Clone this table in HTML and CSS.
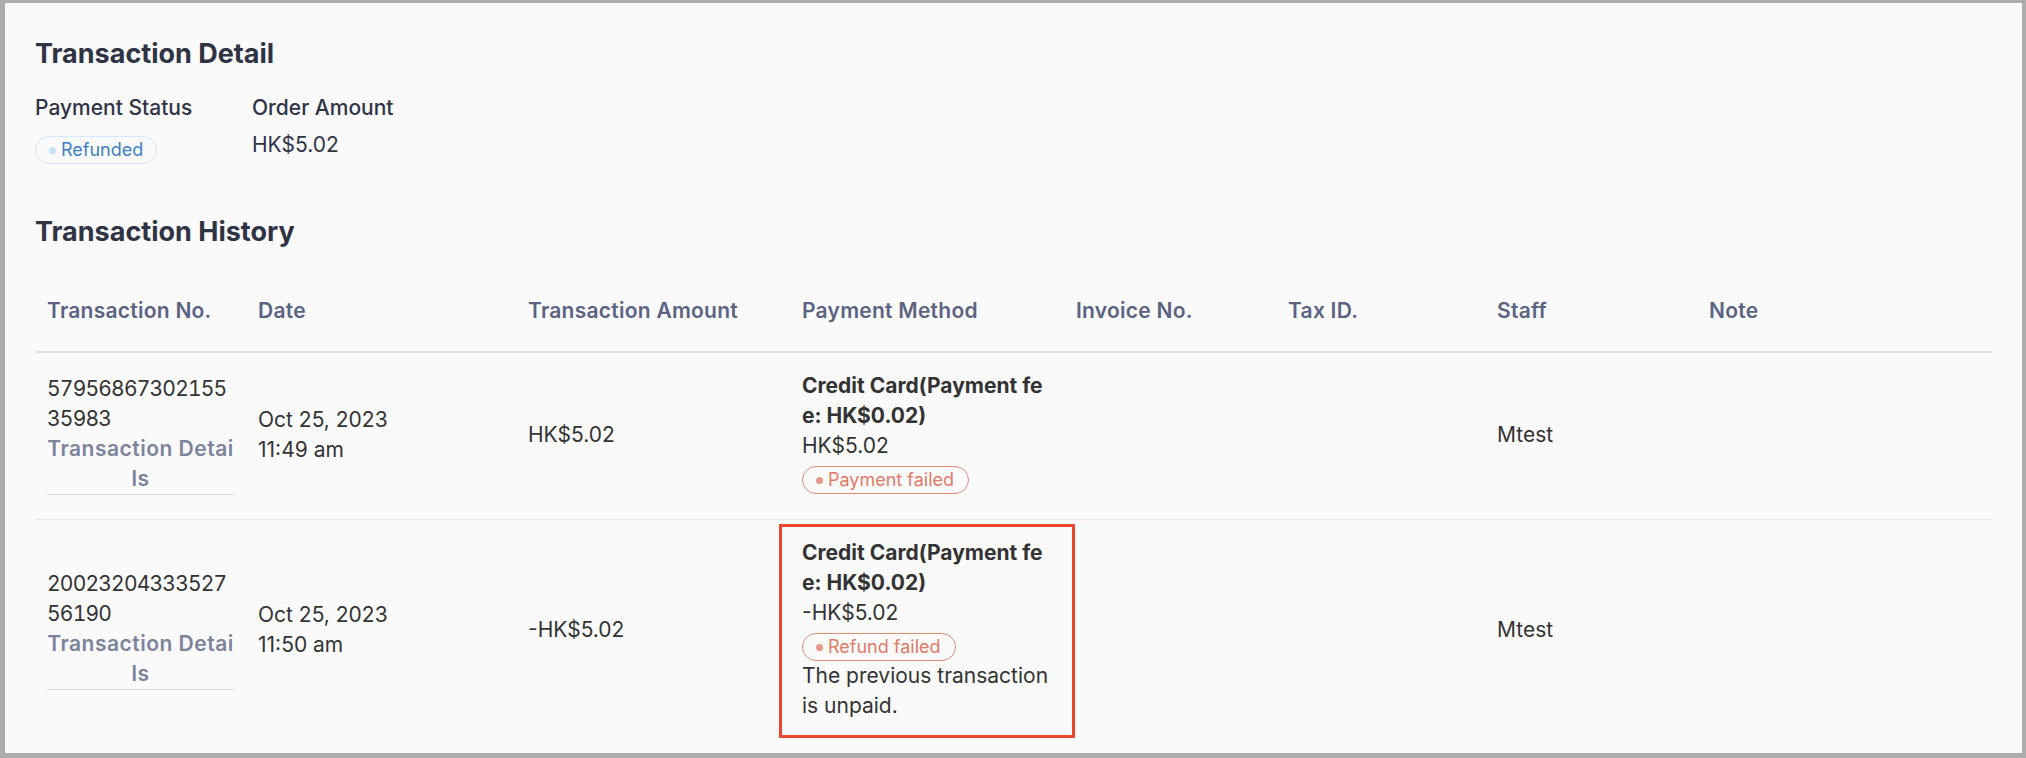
FILE: index.html
```html
<!DOCTYPE html>
<html lang="en">
<head>
<meta charset="utf-8">
<title>Transaction Detail</title>
<link rel="stylesheet" href="styles.css">
</head>
<body>
<div class="frame">
  <h2 class="title">Transaction Detail</h2>
  <div class="fields">
    <div class="field field-status">
      <div class="label">Payment Status</div>
      <div class="value"><span class="badge badge-info"><i class="dot"></i>Refunded</span></div>
    </div>
    <div class="field">
      <div class="label">Order Amount</div>
      <div class="value">HK$5.02</div>
    </div>
  </div>

  <h2 class="title history-title">Transaction History</h2>
  <table class="history">
    <colgroup>
      <col class="c-no"><col class="c-date"><col class="c-amount"><col class="c-method">
      <col class="c-invoice"><col class="c-tax"><col class="c-staff"><col class="c-note">
    </colgroup>
    <thead>
      <tr>
        <th>Transaction No.</th>
        <th>Date</th>
        <th>Transaction Amount</th>
        <th>Payment Method</th>
        <th>Invoice No.</th>
        <th>Tax ID.</th>
        <th>Staff</th>
        <th>Note</th>
      </tr>
    </thead>
    <tbody>
      <tr>
        <td>
          <div class="txn-no">5795686730215535983</div>
          <a class="txn-link">Transaction Details</a>
        </td>
        <td><div>Oct 25, 2023</div><div>11:49 am</div></td>
        <td>HK$5.02</td>
        <td>
          <div class="method">Credit Card(Payment fee: HK$0.02)</div>
          <div>HK$5.02</div>
          <div class="status"><span class="badge badge-error"><i class="dot"></i>Payment failed</span></div>
        </td>
        <td></td>
        <td></td>
        <td>Mtest</td>
        <td></td>
      </tr>
      <tr>
        <td>
          <div class="txn-no">2002320433352756190</div>
          <a class="txn-link">Transaction Details</a>
        </td>
        <td><div>Oct 25, 2023</div><div>11:50 am</div></td>
        <td>-HK$5.02</td>
        <td class="highlight">
          <div class="method">Credit Card(Payment fee: HK$0.02)</div>
          <div>-HK$5.02</div>
          <div class="status"><span class="badge badge-error"><i class="dot"></i>Refund failed</span></div>
          <div class="reason">The previous transaction is unpaid.</div>
        </td>
        <td></td>
        <td></td>
        <td>Mtest</td>
        <td></td>
      </tr>
    </tbody>
  </table>
</div>
</body>
</html>
```

FILE: styles.css
```css
html, body {
  margin: 0;
  padding: 0;
}

body {
  background: #adadad;
  font-family: "Inter", "Noto Sans", sans-serif;
  font-size: 21px;
  line-height: 30px;
  color: #333333;
}

.frame {
  margin: 3px 4px 5px 5px;
  height: 750px;
  box-sizing: border-box;
  padding: 33px 30px 0 30px;
  background: #fafafa;
  overflow: hidden;
}

.title {
  margin: 0;
  font-size: 27px;
  line-height: 36px;
  font-weight: 700;
  color: #2f3445;
}

.fields {
  display: flex;
  gap: 68px;
  margin-top: 21px;
}

.field {
  white-space: nowrap;
}

.field-status {
  width: 149px;
}

.label {
  font-weight: 500;
  color: #2f3445;
}

.value {
  padding-top: 7px;
  color: #2f3445;
}

.value .badge {
  margin-top: 6px;
}

.badge {
  display: flex;
  width: max-content;
  align-items: center;
  gap: 5px;
  box-sizing: border-box;
  height: 28px;
  padding: 0 13px 0 13px;
  border: 1.5px solid;
  border-radius: 14px;
  font-size: 18px;
  line-height: 1;
}

.badge .dot {
  display: block;
  width: 7px;
  height: 7px;
  border-radius: 50%;
}

.badge-info {
  border-color: #d3e8fb;
  color: #3c82c4;
}

.badge-info .dot {
  background: #c6e0f6;
}

.badge-error {
  border-color: #e28a7b;
  color: #df7b68;
  padding: 0 14px 0 13px;
}

.badge-error .dot {
  background: #e4988d;
}

.history-title {
  margin-top: 50px;
}

.history {
  margin-top: 24px;
  width: 100%;
  table-layout: fixed;
  border-collapse: collapse;
}

.c-no { width: 211px; }
.c-date { width: 270px; }
.c-amount { width: 274px; }
.c-method { width: 274px; }
.c-invoice { width: 212px; }
.c-tax { width: 209px; }
.c-staff { width: 212px; }

.history th {
  text-align: left;
  font-weight: 600;
  color: #5a6482;
  letter-spacing: 0.25px;
  padding: 22px 12px 25px;
  border-bottom: 2px solid #d8e0e9;
  vertical-align: top;
}

.history td {
  padding: 18px 12px 21px;
  vertical-align: middle;
  border-bottom: 1px solid #e8e8e8;
}

.history tbody tr:last-child td {
  border-bottom: none;
}

.txn-no {
  word-break: break-all;
  font-variant-numeric: tabular-nums;
  letter-spacing: -0.8px;
}

.txn-link {
  display: block;
  text-align: center;
  font-weight: 600;
  letter-spacing: 0.5px;
  color: #7b849b;
  word-break: break-all;
  border-bottom: 1px solid #d3dae3;
  cursor: pointer;
}

.method {
  font-weight: 700;
  word-break: break-all;
}

.status .badge {
  margin-top: 5px;
}

.status:last-child {
  margin-bottom: 4px;
}

.highlight {
  position: relative;
}

.highlight::after {
  content: "";
  position: absolute;
  left: -11px;
  right: -11px;
  top: 4px;
  bottom: 4px;
  border: 3px solid #ea4630;
  pointer-events: none;
}
```
